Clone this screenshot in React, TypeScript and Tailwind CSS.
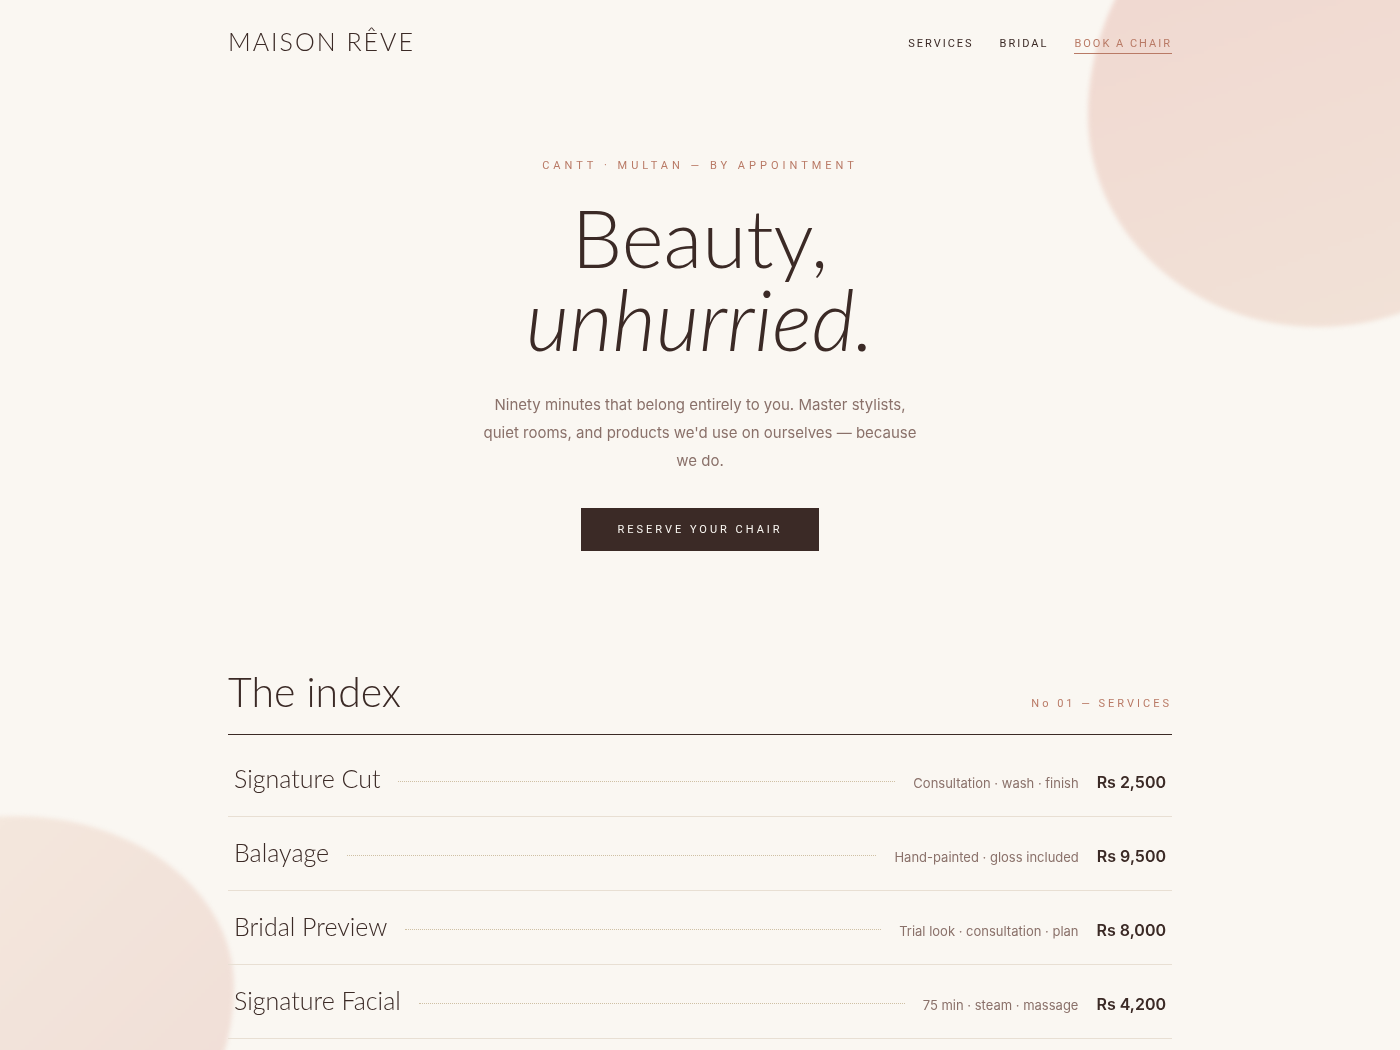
const navLinks = [
  { label: "Services", href: "#services" },
  { label: "Bridal", href: "#bridal" },
]

const services = [
  { name: "Signature Cut", detail: "Consultation · wash · finish", price: "Rs 2,500" },
  { name: "Balayage", detail: "Hand-painted · gloss included", price: "Rs 9,500" },
  { name: "Bridal Preview", detail: "Trial look · consultation · plan", price: "Rs 8,000" },
  { name: "Signature Facial", detail: "75 min · steam · massage", price: "Rs 4,200" },
]

function Petals() {
  return (
    <div aria-hidden="true" className="pointer-events-none">
      <div className="fixed -top-[132px] -right-[148px] h-[459px] w-[460px] rounded-[50%_50%_50%_50%/54%_54%_46%_46%] bg-linear-160 from-[#f0d6cf] to-[#f2e3d8] blur-[2px]" />
      <div className="fixed -bottom-[135px] -left-[186px] h-[369px] w-[420px] rounded-[48%_52%_40%_60%/46%_46%_54%_54%] bg-linear-135 from-[#f5eadf] to-[#f0ddd6] blur-[2px]" />
    </div>
  )
}

function Header() {
  return (
    <header className="flex items-center justify-between pt-[23px] pb-[25px]">
      <a href="#top" className="font-['Lato','Open_Sans',sans-serif] text-[25px] leading-9 font-light tracking-[2px] text-[#3b2a26]">
        MAISON RÊVE
      </a>
      <nav className="flex items-center gap-[26px] pt-1.5 font-['Roboto','Liberation_Sans',sans-serif] text-[11px] leading-4 tracking-[2px] uppercase">
        {navLinks.map((link) => (
          <a key={link.label} href={link.href}>
            {link.label}
          </a>
        ))}
        <a href="#book" className="border-b border-[#b97a66] pt-px pb-px text-[#b97a66]">
          Book a chair
        </a>
      </nav>
    </header>
  )
}

function Hero() {
  return (
    <section className="flex flex-col items-center pt-[74px] text-center">
      <p className="font-['Roboto','Liberation_Sans',sans-serif] text-[11px] leading-4 tracking-[4px] text-[#b97a66] uppercase">
        Cantt · Multan — by appointment
      </p>
      <h1 className="mt-[22px] font-['Lato','Open_Sans',sans-serif] text-[80px] leading-[82px] font-light">
        Beauty,
        <br />
        <em className="text-[84px]">unhurried.</em>
      </h1>
      <p className="mt-[30px] max-w-[440px] text-[15px] leading-7 text-[#8a716a]">
        Ninety minutes that belong entirely to you. Master stylists, quiet rooms, and products we'd use on ourselves —
        because we do.
      </p>
      <button
        type="button"
        className="mt-[33px] bg-[#3b2a26] px-9 pt-3.5 pb-[13px] font-['Roboto','Liberation_Sans',sans-serif] text-[11px] leading-4 tracking-[3px] text-[#faf7f2] uppercase"
      >
        Reserve your chair
      </button>
    </section>
  )
}

function ServiceIndex() {
  return (
    <section id="services" className="mt-[115px]">
      <div className="flex items-baseline justify-between border-b border-[#3b2a26] pb-4">
        <h2 className="font-['Lato','Open_Sans',sans-serif] text-[41px] leading-[52px] font-light">The index</h2>
        <span className="font-['Roboto','Liberation_Sans',sans-serif] text-[11px] leading-4 tracking-[3px] text-[#b97a66]">
          No 01 — SERVICES
        </span>
      </div>
      <ul className="pt-2">
        {services.map((service) => (
          <li key={service.name} className="flex items-baseline gap-[18px] border-b border-[#e8dfd3] px-1.5 pt-[19px] pb-[21px]">
            <h3 className="font-['Lato','Open_Sans',sans-serif] text-[25px] leading-[33px] font-light">{service.name}</h3>
            <span className="mt-1.5 flex-1 self-center border-b border-dotted border-[#cfc0a4]" />
            <span className="text-[13px] leading-5 text-[#8a716a]">{service.detail}</span>
            <span className="text-base leading-5 font-semibold">{service.price}</span>
          </li>
        ))}
      </ul>
    </section>
  )
}

export default function App() {
  return (
    <div id="top" className="relative min-h-screen overflow-hidden bg-[#faf7f2] font-['Inter','Liberation_Sans',sans-serif] text-[#3b2a26]">
      <Petals />
      <main className="relative mx-auto max-w-[1000px] px-7">
        <Header />
        <Hero />
        <ServiceIndex />
      </main>
    </div>
  )
}
